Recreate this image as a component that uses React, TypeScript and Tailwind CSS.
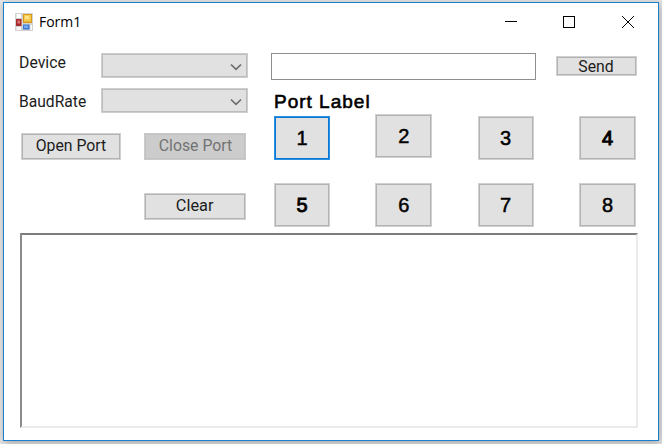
import type { ReactNode } from 'react';

function Btn({ className = '', tone = 'border-[#d0d0d0] bg-[#e1e1e1] shadow-[inset_0_0_0_1px_#b3b3b3]', label = '', children }: { className?: string; tone?: string; label?: string; children: ReactNode }) {
  return (
    <button className={`flex shrink-0 items-center justify-center whitespace-nowrap border leading-none ${tone} ${className}`}>
      <span className={label}>{children}</span>
    </button>
  );
}

function Combo() {
  return (
    <div className="flex h-[25px] w-[147px] shrink-0 items-center justify-end border border-[#cecece] bg-[#e1e1e1] pr-[5px] pt-[2px] shadow-[inset_0_0_0_1px_#bcbcbc]">
      <svg width="12" height="8" viewBox="0 0 12 8" fill="none" stroke="#6c6c6c" strokeWidth="1.7">
        <path d="M1 1.5 L6 6.3 L11 1.5" />
      </svg>
    </div>
  );
}

function FormIcon() {
  return (
    <svg width="18" height="18" viewBox="0 0 18 18">
      <rect width="18" height="18" fill="#d2d2d2" />
      <rect x="1.5" y="1" width="4.5" height="4" fill="#fff" />
      <rect x="1" y="6" width="5.5" height="7" fill="#a52a2c" />
      <rect x="2.5" y="7.5" width="2.5" height="3" fill="#df7770" />
      <rect x="1.5" y="14" width="4.5" height="3" fill="#f7f7f7" />
      <rect x="8" y="1" width="9" height="9" fill="#d69b18" />
      <rect x="9" y="2" width="7" height="6.5" fill="#f7cb50" />
      <rect x="10" y="3" width="4" height="3" fill="#ffe38a" />
      <rect x="8" y="11.5" width="6.5" height="5" fill="#3d78d0" />
      <rect x="9" y="12.5" width="4" height="2.5" fill="#76aaf0" />
      <rect x="15.5" y="12" width="1.5" height="5" fill="#fff" />
    </svg>
  );
}

export default function App() {
  return (
    <div className="h-[447px] w-[665px] overflow-hidden bg-white font-['Roboto',sans-serif] text-[17px] text-[#1c1c1c]">
      <div className="h-[444px] w-[662px] overflow-hidden bg-[#e6e6e6] pl-[3px] pt-[2px]">
        <div className="flex h-[439px] w-[656px] flex-col border border-[#1b80cc] bg-white shadow-[1px_2px_8px_rgba(0,0,0,0.3)]">
          <header className="flex h-[38px] shrink-0 items-center pl-[11px] pr-[23px]">
            <FormIcon />
            <span className="ml-[6px] font-['Open_Sans',sans-serif] text-[14px] leading-none tracking-[-0.05px] text-black">Form1</span>
            <svg className="ml-auto" width="130" height="14" viewBox="0 0 130 14" fill="none" stroke="#000" strokeWidth="1">
              <path d="M0 6.5 H12" />
              <rect x="58.5" y="1.5" width="11" height="11" />
              <path d="M117 1 L129 13 M129 1 L117 13" />
            </svg>
          </header>
          <main className="flex h-[192px] shrink-0">
            <section className="w-[267px] shrink-0 pt-[12px]">
              <div className="flex h-[25px] pl-[15px]">
                <span className="w-[82px] origin-left scale-x-[0.93] leading-[19px]">Device</span>
                <Combo />
              </div>
              <div className="mt-[10px] flex h-[25px] pl-[15px]">
                <span className="w-[82px] origin-left scale-x-[0.92] pt-[4px] leading-[19px]">BaudRate</span>
                <Combo />
              </div>
              <div className="mt-[20px] flex gap-[23px] pl-[17px]">
                <Btn className="h-[27px] w-[100px] pb-[2px]" label="scale-x-[0.93]">Open Port</Btn>
                <Btn className="h-[27px] w-[102px] pb-[2px] text-[#737373]" tone="border-[#cbcbcb] bg-[#cccccc] shadow-[inset_0_0_0_1px_#c1c1c1]" label="scale-x-[0.93]">Close Port</Btn>
              </div>
              <div className="mt-[33px] pl-[140px]">
                <Btn className="h-[27px] w-[102px] pb-[2px]" label="scale-x-[0.96]">Clear</Btn>
              </div>
            </section>
            <section className="w-[367px] shrink-0 pt-[12px]">
              <div className="flex gap-[20px]">
                <div className="h-[27px] w-[265px] border border-[#8e8e8e] bg-white" />
                <Btn className="mt-[3px] h-[20px] w-[81px]" label="scale-x-[0.93]">Send</Btn>
              </div>
              <div className="mt-[12px] whitespace-nowrap pl-[3px] font-['Liberation_Sans',sans-serif] text-[19px] leading-[20px] tracking-[1px] text-black [-webkit-text-stroke:0.6px_#000]">Port Label</div>
              <div className="mt-[2px] flex justify-between pl-[3px] pr-[2px] font-['Liberation_Sans',sans-serif] text-[20px] text-black [-webkit-text-stroke:0.5px_#000]">
                <Btn className="mt-[2px] h-[44px] w-[56px]" tone="border-[#2c90e0] bg-[#e1e1e1] shadow-[inset_0_0_0_1px_#0878d7]">1</Btn>
                <Btn className="h-[44px] w-[57px]">2</Btn>
                <Btn className="mt-[2px] h-[44px] w-[56px]">3</Btn>
                <Btn className="mt-[2px] h-[44px] w-[57px] [-webkit-text-stroke:1px_#000]">4</Btn>
              </div>
              <div className="mt-[23px] flex justify-between pl-[3px] pr-[2px] font-['Liberation_Sans',sans-serif] text-[20px] text-black [-webkit-text-stroke:0.5px_#000]">
                <Btn className="h-[44px] w-[56px] [-webkit-text-stroke:0.9px_#000]">5</Btn>
                <Btn className="h-[44px] w-[57px]">6</Btn>
                <Btn className="h-[44px] w-[56px]">7</Btn>
                <Btn className="h-[44px] w-[57px]">8</Btn>
              </div>
            </section>
          </main>
          <div className="ml-[16px] h-[195px] w-[618px] shrink-0 border-2 border-b-[#ebebeb] border-l-[#8a8a8a] border-r-[#ebebeb] border-t-[#7d7d7d] bg-white" />
        </div>
      </div>
    </div>
  );
}
